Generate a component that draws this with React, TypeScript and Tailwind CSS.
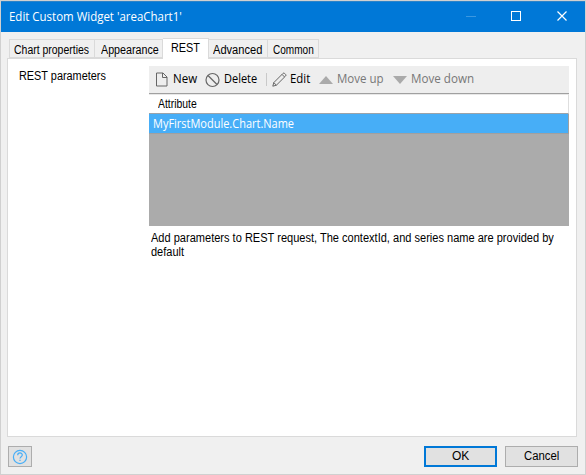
import React, { useLayoutEffect, useRef, useState } from 'react';

const SANS = "font-['Liberation_Sans',Arial,sans-serif] text-[12px]";
const UI = "font-['Open_Sans','Noto_Sans',sans-serif] text-[12px]";

type FitProps = { width: number; className?: string; children: string };

/* A single line of text condensed or widened to a given width. */
function Fit({ width, className = '', children }: FitProps) {
  const ref = useRef<HTMLSpanElement>(null);
  const [scale, setScale] = useState(1);
  useLayoutEffect(() => {
    if (ref.current) setScale(width / ref.current.offsetWidth);
  }, [width]);
  return (
    <span className="block" style={{ width }}>
      <span
        ref={ref}
        className={`inline-block origin-left whitespace-nowrap align-top leading-4 ${className}`}
        style={{ transform: `scaleX(${scale})` }}
      >
        {children}
      </span>
    </span>
  );
}

function Tab({ label, width, text, className }: { label: string; width: number; text: number; className: string }) {
  return (
    <div className={`h-[19px] border-y border-r border-[#dadada] bg-[#f0f0f0] pt-[2px] ${className}`} style={{ width }}>
      <Fit width={text}>{label}</Fit>
    </div>
  );
}

export default function App() {
  return (
    <div className={`flex h-[475px] w-[586px] flex-col border border-[#d0d0d0] bg-[#f0f0f0] text-black ${SANS}`}>
      <header className="flex h-[31px] shrink-0 items-start border-t border-[#2b83c9] bg-[#0078d7] text-white">
        <div className="pl-2 pt-[7px]">
          <Fit width={173} className={UI}>{"Edit Custom Widget 'areaChart1'"}</Fit>
        </div>
        <svg className="ml-auto h-[30px] w-[139px]" viewBox="0 0 139 30" fill="none" stroke="white" shapeRendering="crispEdges">
          <path d="M20 14.5h10" stroke="#3b98e1" />
          <path d="M65.500 9.500h9v9h-9z" />
          <path d="M111.500 9.500l9 9M120.500 9.500l-9 9" shapeRendering="auto" strokeWidth="1.200" />
        </svg>
      </header>

      <div className="flex h-[26px] shrink-0 items-end pl-2">
        <Tab label="Chart properties" width={86} text={75} className="border-l pl-1" />
        <Tab label="Appearance" width={68} text={58} className="pl-[6px]" />
        <div className="z-10 -mb-px h-[21px] w-[46px] border-r border-t border-[#dadada] bg-white pl-[8px] pt-[1px]">
          <Fit width={29}>REST</Fit>
        </div>
        <Tab label="Advanced" width={59} text={49} className="pl-[4px]" />
        <Tab label="Common" width={51} text={41} className="pl-[5px]" />
      </div>

      <main className="ml-[6px] flex h-[379px] w-[570px] shrink-0 border border-[#dadada] bg-white">
        <div className="w-[141px] shrink-0 pl-[11px] pt-[9px]">
          <Fit width={87}>REST parameters</Fit>
        </div>
        <div className="mt-[7px] w-[420px]">
          <div className={`flex h-[27px] items-center bg-[#eeeeee] ${UI}`}>
            <svg className="ml-[6px] h-[15px] w-[14px]" viewBox="0 0 14 15" fill="none" stroke="#666">
              <path d="M1.500 1h6.500l4 4v9H1.500zM7.500 1v4.500H12" />
            </svg>
            <div className="ml-1"><Fit width={24}>New</Fit></div>
            <svg className="ml-2 h-[16px] w-[15px]" viewBox="0 0 15 16" fill="none" stroke="#666" strokeWidth="1.200">
              <circle cx="7.500" cy="8" r="6.500" /><path d="M3 3.500l9 9" />
            </svg>
            <div className="ml-1"><Fit width={33}>Delete</Fit></div>
            <div className="ml-[9px] h-[13px] w-px bg-[#c9c9c9]" />
            <svg className="ml-[5px] h-[15px] w-[15px]" viewBox="0 0 15 15" fill="none" stroke="#666">
              <path d="M.8 14.200l1-3.600L11 1.400q.8-.8 1.600 0l1 1q.8.8 0 1.600L4.400 13.200zM1.800 10.600l2.600 2.600M10 2.400l2.600 2.600" />
            </svg>
            <div className="ml-[3px]"><Fit width={20}>Edit</Fit></div>
            <svg className="ml-[9px] h-[8px] w-[14px]" viewBox="0 0 14 8" fill="#aaa"><path d="M0 8L7 0l7 8z" /></svg>
            <div className="ml-1 text-[#777]"><Fit width={47}>Move up</Fit></div>
            <svg className="ml-[9px] h-[8px] w-[14px]" viewBox="0 0 14 8" fill="#aaa"><path d="M0 0h14L7 8z" /></svg>
            <div className="ml-1 text-[#777]"><Fit width={63}>Move down</Fit></div>
          </div>
          <div className="h-[133px] border-t border-[#a0a0a0] bg-[#ababab]">
            <div className="h-[20px] border-b border-r border-t border-b-[#9ba3aa] border-r-[#dedede] border-t-[#e8e8e8] bg-white pl-[9px] pt-[1px]">
              <Fit width={39}>Attribute</Fit>
            </div>
            <div className={`h-[20px] border-b border-r border-[#a0a0a0] bg-[#47aef7] pl-1 pt-[2px] text-white ${UI}`}>
              <Fit width={141}>MyFirstModule.Chart.Name</Fit>
            </div>
          </div>
          <div className="pl-[2px] pt-[4px]">
            <Fit width={403}>Add parameters to REST request, The contextId, and series name are provided by</Fit>
            <div className="-mt-[4px]"><Fit width={33}>default</Fit></div>
          </div>
        </div>
      </main>

      <footer className="flex items-start pt-[9px]">
        <button className="ml-[7px] flex h-[21px] w-[24px] items-center justify-center border border-[#adadad] bg-[#e1e1e1]">
          <svg className="h-[16px] w-[16px]" viewBox="0 0 16 16" fill="none" stroke="#47aef7" strokeWidth="1.200">
            <circle cx="8" cy="8" r="6.600" />
            <path d="M5.700 6.200c0-3 4.600-2.900 4.600-.2 0 1.700-2.300 1.700-2.300 3.600M8 10.800v1.300" />
          </svg>
        </button>
        <button className="ml-auto flex h-[21px] w-[73px] justify-center border-2 border-[#0078d7] bg-[#e1e1e1]">
          <Fit width={17}>OK</Fit>
        </button>
        <button className="ml-2 mr-[7px] flex h-[21px] w-[73px] justify-center border border-[#adadad] bg-[#e1e1e1] pt-[1px]">
          <Fit width={35}>Cancel</Fit>
        </button>
      </footer>
    </div>
  );
}
